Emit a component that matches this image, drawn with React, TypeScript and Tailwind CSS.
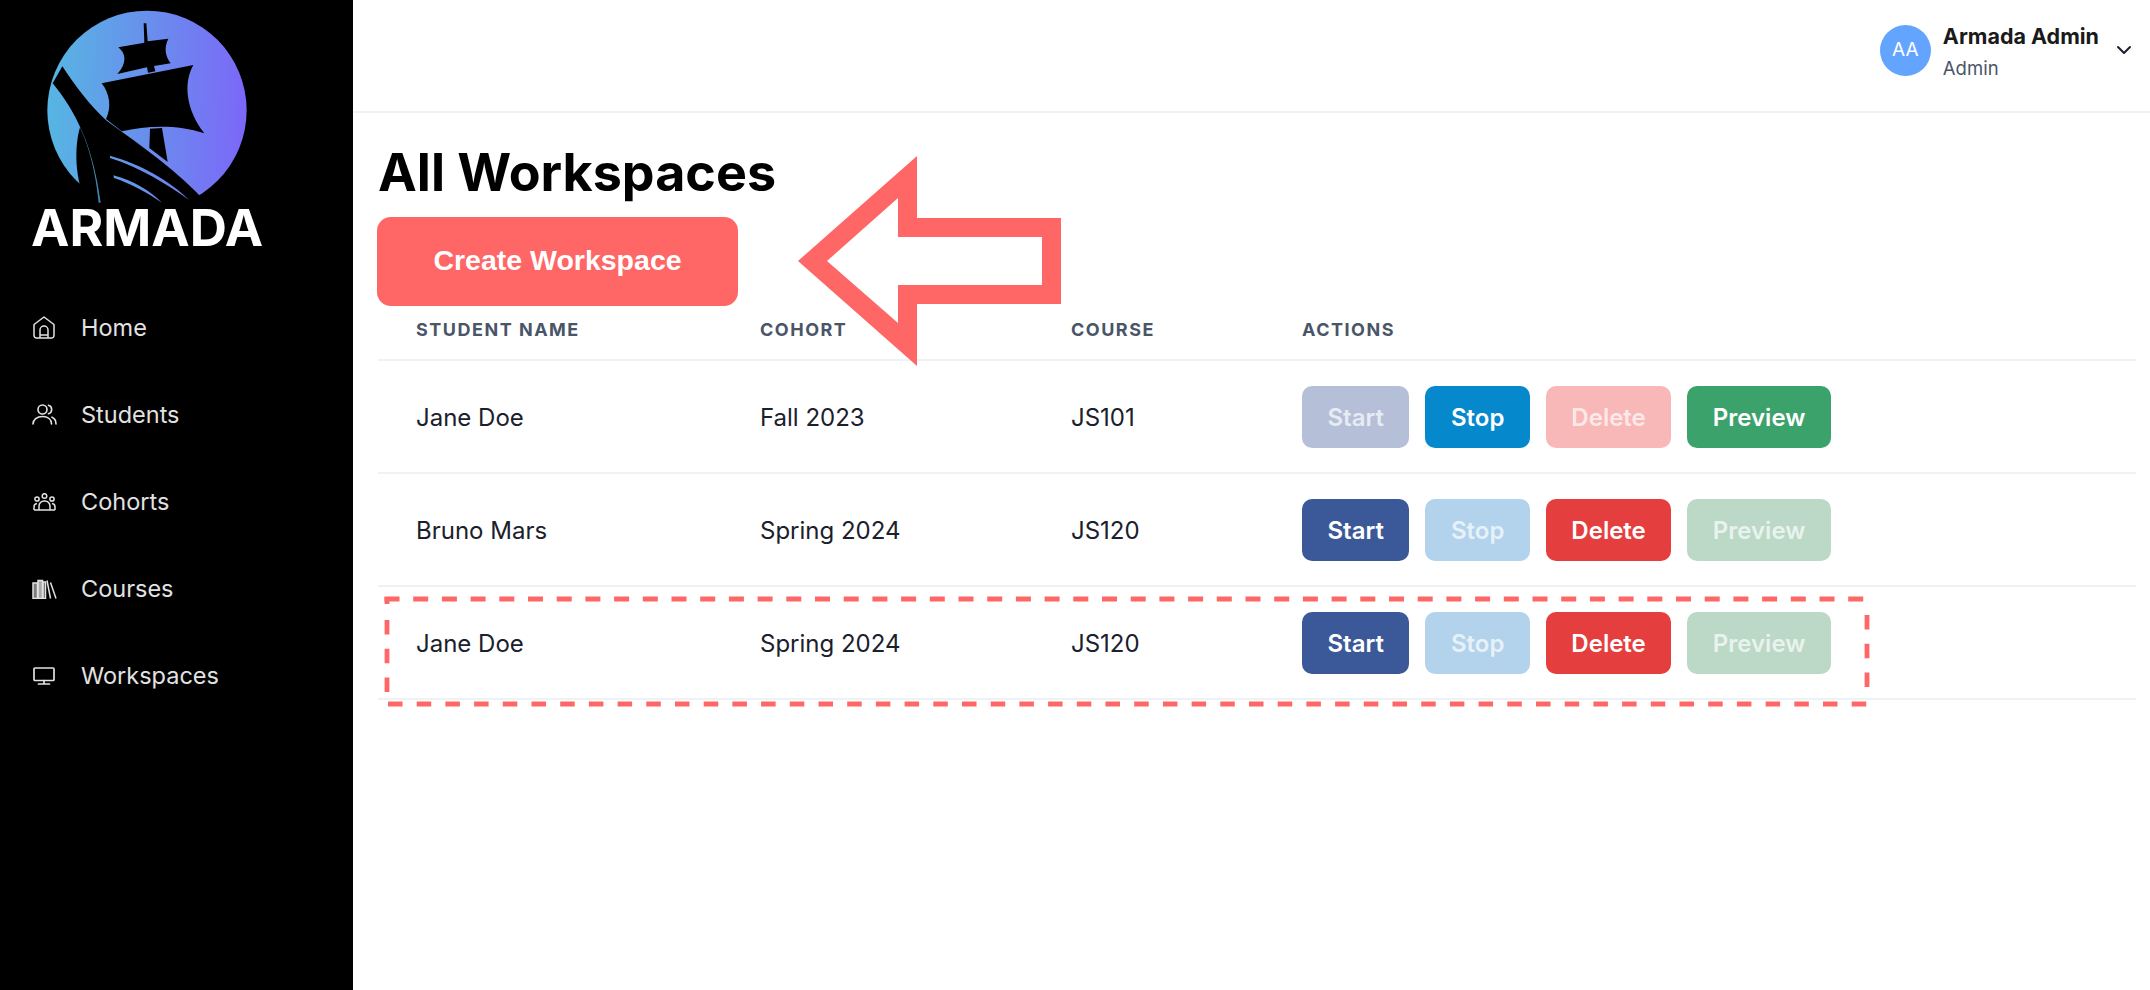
import { ChevronDown } from 'lucide-react'

const sans = 'font-["Inter",sans-serif]'

function HomeIcon() {
  return (
    <svg width="22" height="23" viewBox="0 0 22 23" fill="none" stroke="currentColor" strokeWidth="1.5" strokeLinejoin="round">
      <path d="M1 8.500 11 1l10 7.500V19.500a2.500 2.500 0 0 1-2.500 2.500h-15A2.500 2.500 0 0 1 1 19.500z" />
      <path d="M7 22v-8a4 4 0 0 1 8 0v8M7 19h8" />
    </svg>
  )
}

function UsersIcon() {
  return (
    <svg width="25" height="21" viewBox="0 0 25 21" fill="none" stroke="currentColor" strokeWidth="1.6" strokeLinecap="round">
      <circle cx="10.500" cy="5.500" r="4.500" />
      <path d="M1 20c0-4.500 4-7.500 9.500-7.500S19.500 15.500 19.500 20" />
      <path d="M16.500 1.200a4.500 4.500 0 0 1 0 8.600M20 13.200c2.500 1 4 3.400 4 6.800" />
    </svg>
  )
}

function CohortIcon() {
  return (
    <svg width="23" height="18" viewBox="0 0 23 18" fill="none" stroke="currentColor" strokeWidth="1.5" strokeLinejoin="round">
      <circle cx="11.500" cy="3" r="2.300" />
      <circle cx="4" cy="6" r="2.100" />
      <circle cx="19" cy="6" r="2.100" />
      <path d="M1 17v-3a3.500 3.500 0 0 1 3-3.500M22 17v-3a3.500 3.500 0 0 0-3-3.500" />
      <path d="M6 17v-4a5 5 0 0 1 5-5h1a5 5 0 0 1 5 5v4" />
      <path d="M1 17h21" />
    </svg>
  )
}

function BooksIcon() {
  return (
    <svg width="25" height="20" viewBox="0 0 25 20" fill="none" stroke="currentColor" strokeWidth="1.500">
      <path d="M1 4h4.500v15.500H1z" fill="currentColor" fillOpacity="0.55" />
      <path d="M6 1.500h4.500v18H6z" fill="currentColor" fillOpacity="0.75" />
      <path d="M11 3h2.500v16.500H11z" fill="currentColor" fillOpacity="0.4" />
      <path d="M15 1.500l3.500 18M18.500 3.500l5.500 16" />
    </svg>
  )
}

function MonitorIcon() {
  return (
    <svg width="22" height="18" viewBox="0 0 22 18" fill="none" stroke="currentColor" strokeWidth="1.700" strokeLinecap="round" strokeLinejoin="round">
      <rect x="1" y="1" width="20" height="12.500" rx="1" />
      <path d="M11 13.500v3.500M5.500 17h11" />
    </svg>
  )
}

const navItems = [
  { label: 'Home', icon: <HomeIcon /> },
  { label: 'Students', icon: <UsersIcon /> },
  { label: 'Cohorts', icon: <CohortIcon /> },
  { label: 'Courses', icon: <BooksIcon /> },
  { label: 'Workspaces', icon: <MonitorIcon /> },
]

function Logo() {
  return (
    <svg width="353" height="204" viewBox="0 0 1059 612" className="block">
      <defs>
        <linearGradient id="armada" gradientUnits="userSpaceOnUse" x1="142" y1="300" x2="740" y2="320">
          <stop offset="0" stopColor="#56b6e2" />
          <stop offset="1" stopColor="#7c67f8" />
        </linearGradient>
      </defs>
      <circle cx="441" cy="319" r="299" fill="url(#armada)" />
      {/* hull */}
      <path d="M187 187 L158 238 C225 320 280 420 302 612 L640 612 L620 598 C540 505 430 430 320 350 C270 305 225 245 187 187Z" fill="#000" />
      <path d="M330 455 C420 480 510 530 568 588 C500 540 420 490 330 462Z" fill="url(#armada)" />
      <path d="M340 514 C400 530 450 560 486 596 C440 565 395 540 342 522Z" fill="url(#armada)" />
      {/* feather */}
      <path d="M240 370 C222 430 225 530 258 592 L296 592 C290 510 270 430 240 370Z" fill="#000" />
      <path d="M240 370 C270 430 290 510 302 596 L296 596 C288 510 268 430 240 370Z" fill="#3f86ad" />
      {/* sails */}
      <path d="M431 58 L439 58 L443 112 L505 104 C492 130 495 155 512 178 L462 186 L466 202 L444 206 L441 190 L352 210 C380 180 380 150 355 130 L433 116Z" fill="#000" />
      <path d="M305 238 L580 183 C548 240 560 320 613 388 C530 360 440 365 365 382 L318 345 C335 310 330 270 305 238Z" fill="#000" />
      <path d="M450 374 L486 372 L503 474 L448 432Z" fill="#000" />
    </svg>
  )
}

function ActionButton({ label, className }: { label: string; className: string }) {
  return (
    <button className={`h-[62px] rounded-[10px] px-[25.500px] pt-[2px] text-[24px] font-semibold ${className}`}>
      {label}
    </button>
  )
}

const rows = [
  { name: 'Jane Doe', cohort: 'Fall 2023', course: 'JS101', running: true },
  { name: 'Bruno Mars', cohort: 'Spring 2024', course: 'JS120', running: false },
  { name: 'Jane Doe', cohort: 'Spring 2024', course: 'JS120', running: false },
]

export default function App() {
  return (
    <div className={`flex h-[990px] w-[2150px] overflow-hidden bg-white ${sans}`}>
      <aside className="w-[353px] shrink-0 bg-black pt-[4px]">
        <Logo />
        <div className="mt-[-7px] pl-[31px] text-[51.500px] leading-[52px] font-bold text-white">ARMADA</div>
        <nav className="mt-[31px] flex flex-col">
          {navItems.map((item) => (
            <div key={item.label} className="flex h-[87px] items-center pl-[31px] text-[23.500px] text-[#e2e2e2]">
              <span className="mr-[24px] flex w-[26px] shrink-0 justify-center">{item.icon}</span>
              {item.label}
            </div>
          ))}
        </nav>
      </aside>

      <main className="relative flex-1">
        <header className="flex h-[113px] items-start justify-end border-b-2 border-[#edf2f7] pt-[25px] pr-[14px]">
          <div className="flex h-[51px] w-[51px] items-center justify-center rounded-full bg-[#63a4ff] text-[19px] text-white">AA</div>
          <div className="mr-[13px] ml-[12px] flex flex-col">
            <span className="mt-[-1px] text-[21.500px] leading-[24px] font-bold text-[#1a1a1a]">Armada Admin</span>
            <span className="mt-[9px] text-[18.500px] leading-[22px] text-[#4a5568]">Admin</span>
          </div>
          <ChevronDown size={24} className="mt-[13px] text-[#1a202c]" />
        </header>

        <div className="pt-[28px] pr-[14px] pl-[25px]">
          <h1 className="text-[52px] leading-[64px] font-bold text-black">All Workspaces</h1>
          <button className='mt-[12px] ml-[-1px] h-[89px] w-[361px] rounded-[14px] bg-[#ff6666] pb-[2px] font-["Liberation_Sans",sans-serif] text-[28.500px] font-bold text-white'>
            Create Workspace
          </button>
          <table className="w-full table-fixed border-collapse">
            <thead>
              <tr className="h-[54px] border-b-2 border-[#edf2f7] text-left text-[18px] tracking-[1.500px] text-[#4a5568] uppercase">
                <th className="w-[344px] pb-[7px] pl-[38px] font-bold">Student Name</th>
                <th className="w-[311px] pb-[7px] pl-[38px] font-bold">Cohort</th>
                <th className="w-[231px] pb-[7px] pl-[38px] font-bold">Course</th>
                <th className="pb-[7px] pl-[38px] font-bold">Actions</th>
              </tr>
            </thead>
            <tbody>
              {rows.map((row, i) => (
                <tr key={i} className="h-[113px] border-b-2 border-[#edf2f7] text-[24px] text-[#1a202c]">
                  <td className="pt-[2px] pl-[38px]">{row.name}</td>
                  <td className="pt-[2px] pl-[38px]">{row.cohort}</td>
                  <td className="pt-[2px] pl-[38px]">{row.course}</td>
                  <td className="pl-[38px]">
                    <div className="flex gap-[16px]">
                      <ActionButton label="Start" className={row.running ? 'bg-[#b5c0d8] text-white/70' : 'bg-[#3b5998] text-white'} />
                      <ActionButton label="Stop" className={row.running ? 'bg-[#0588cc] text-white' : 'bg-[#b2d3eb] text-white/70'} />
                      <ActionButton label="Delete" className={row.running ? 'bg-[#f8b8b8] text-white/70' : 'bg-[#e53e3e] text-white'} />
                      <ActionButton label="Preview" className={row.running ? 'bg-[#3ca26c] text-white' : 'bg-[#bbd9c6] text-white/70'} />
                    </div>
                  </td>
                </tr>
              ))}
            </tbody>
          </table>
        </div>

        {/* annotation arrow */}
        <svg className="pointer-events-none absolute top-[150px] left-[437px]" width="280" height="220" viewBox="790 150 280 220">
          <path
            fillRule="evenodd"
            fill="#ff6666"
            d="M798 261 917 156V218H1061V304H917V366ZM827 261 898 323V285H1042V237H898V198Z"
          />
        </svg>

        {/* annotation dashed box */}
        <svg className="pointer-events-none absolute top-[590px] left-[27px]" width="1495" height="120" viewBox="380 590 1495 120" fill="none" stroke="#ff6666" strokeWidth="4.800">
          <path d="M384.500 599H1869" strokeDasharray="15 13.700" />
          <path d="M1867 615V700" strokeDasharray="14.500 14.200" />
          <path d="M388 704H1869" strokeDasharray="14.500 14.200" />
          <path d="M387 597V604" />
          <path d="M387 620V692" strokeDasharray="14.500 14.200" />
        </svg>
      </main>
    </div>
  )
}
